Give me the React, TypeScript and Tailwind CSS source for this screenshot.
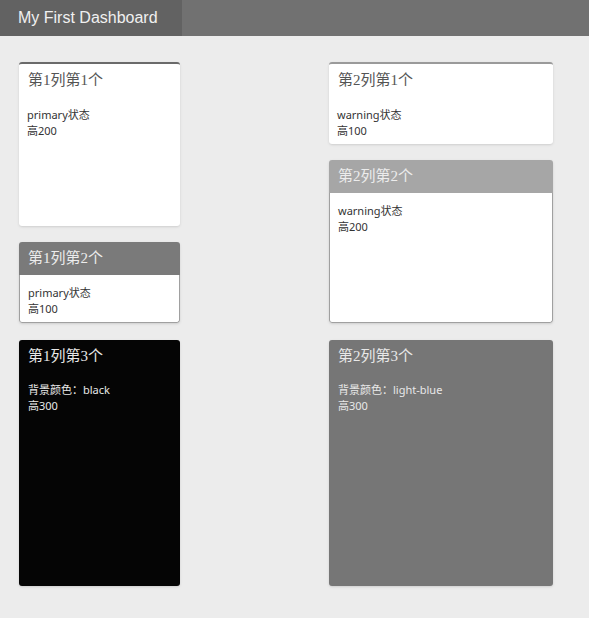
const titleFont = "font-['Liberation_Serif','Noto_Sans_CJK_SC',serif]";
const bodyFont = "font-['Noto_Sans','Noto_Sans_CJK_SC',sans-serif]";

type BoxProps = {
  title: string;
  lines: string[];
  variant: "top" | "head" | "solid";
  tone: string;
  height: string;
};

function Box({ title, lines, variant, tone, height }: BoxProps) {
  if (variant === "solid") {
    return (
      <div className={`${height} ${tone} rounded-[3px] shadow-sm text-[#e8e8e8]`}>
        <div className={`h-[33px] flex items-center px-[9px] text-[15px] ${titleFont}`}>{title}</div>
        <div className={`px-[9px] pt-[9px] text-[11px] leading-4 ${bodyFont}`}>
          {lines.map((l) => (
            <div key={l}>{l}</div>
          ))}
        </div>
      </div>
    );
  }
  if (variant === "head") {
    return (
      <div className={`${height} flex flex-col rounded-[3px] shadow-sm overflow-hidden`}>
        <div className={`h-[33px] shrink-0 flex items-center px-[9px] text-[15px] text-[#ececec] ${tone} ${titleFont}`}>
          {title}
        </div>
        <div className={`flex-1 bg-white border border-t-0 border-[#a0a0a0] rounded-b-[3px] px-[8px] pt-[10px] text-[11px] leading-4 text-[#333] ${bodyFont}`}>
          {lines.map((l) => (
            <div key={l}>{l}</div>
          ))}
        </div>
      </div>
    );
  }
  return (
    <div className={`${height} bg-white rounded-[3px] border-t-2 ${tone} shadow-sm`}>
      <div className={`h-[33px] flex items-center px-[9px] text-[15px] text-[#555] ${titleFont}`}>{title}</div>
      <div className={`px-[8px] pt-[10px] text-[11px] leading-4 text-[#333] ${bodyFont}`}>
        {lines.map((l) => (
          <div key={l}>{l}</div>
        ))}
      </div>
    </div>
  );
}

export default function App() {
  return (
    <div className="min-h-screen bg-[#ececec]">
      <header className="h-[36px] flex bg-[#717171]">
        <div className="w-[182px] bg-[#626262] flex items-center pl-[18px] text-[16px] text-[#f0f0f0] font-['Liberation_Sans',Arial,sans-serif]">
          My First Dashboard
        </div>
      </header>

      <div className="grid grid-cols-[161px_224px] gap-x-[149px] pl-[19px] pt-[26px]">
        <div className="flex flex-col gap-[16px]">
          <Box title="第1列第1个" lines={["primary状态", "高200"]} variant="top" tone="border-[#6a6a6a]" height="h-[164px]" />
          <Box title="第1列第2个" lines={["primary状态", "高100"]} variant="head" tone="bg-[#7a7a7a]" height="h-[81px]" />
          <Box title="第1列第3个" lines={["背景颜色：black", "高300"]} variant="solid" tone="bg-[#050505] mt-px" height="h-[246px]" />
        </div>
        <div className="flex flex-col gap-[16px]">
          <Box title="第2列第1个" lines={["warning状态", "高100"]} variant="top" tone="border-[#9a9a9a]" height="h-[82px]" />
          <Box title="第2列第2个" lines={["warning状态", "高200"]} variant="head" tone="bg-[#a6a6a6]" height="h-[163px]" />
          <Box title="第2列第3个" lines={["背景颜色：light-blue", "高300"]} variant="solid" tone="bg-[#767676] mt-px" height="h-[246px]" />
        </div>
      </div>
    </div>
  );
}
